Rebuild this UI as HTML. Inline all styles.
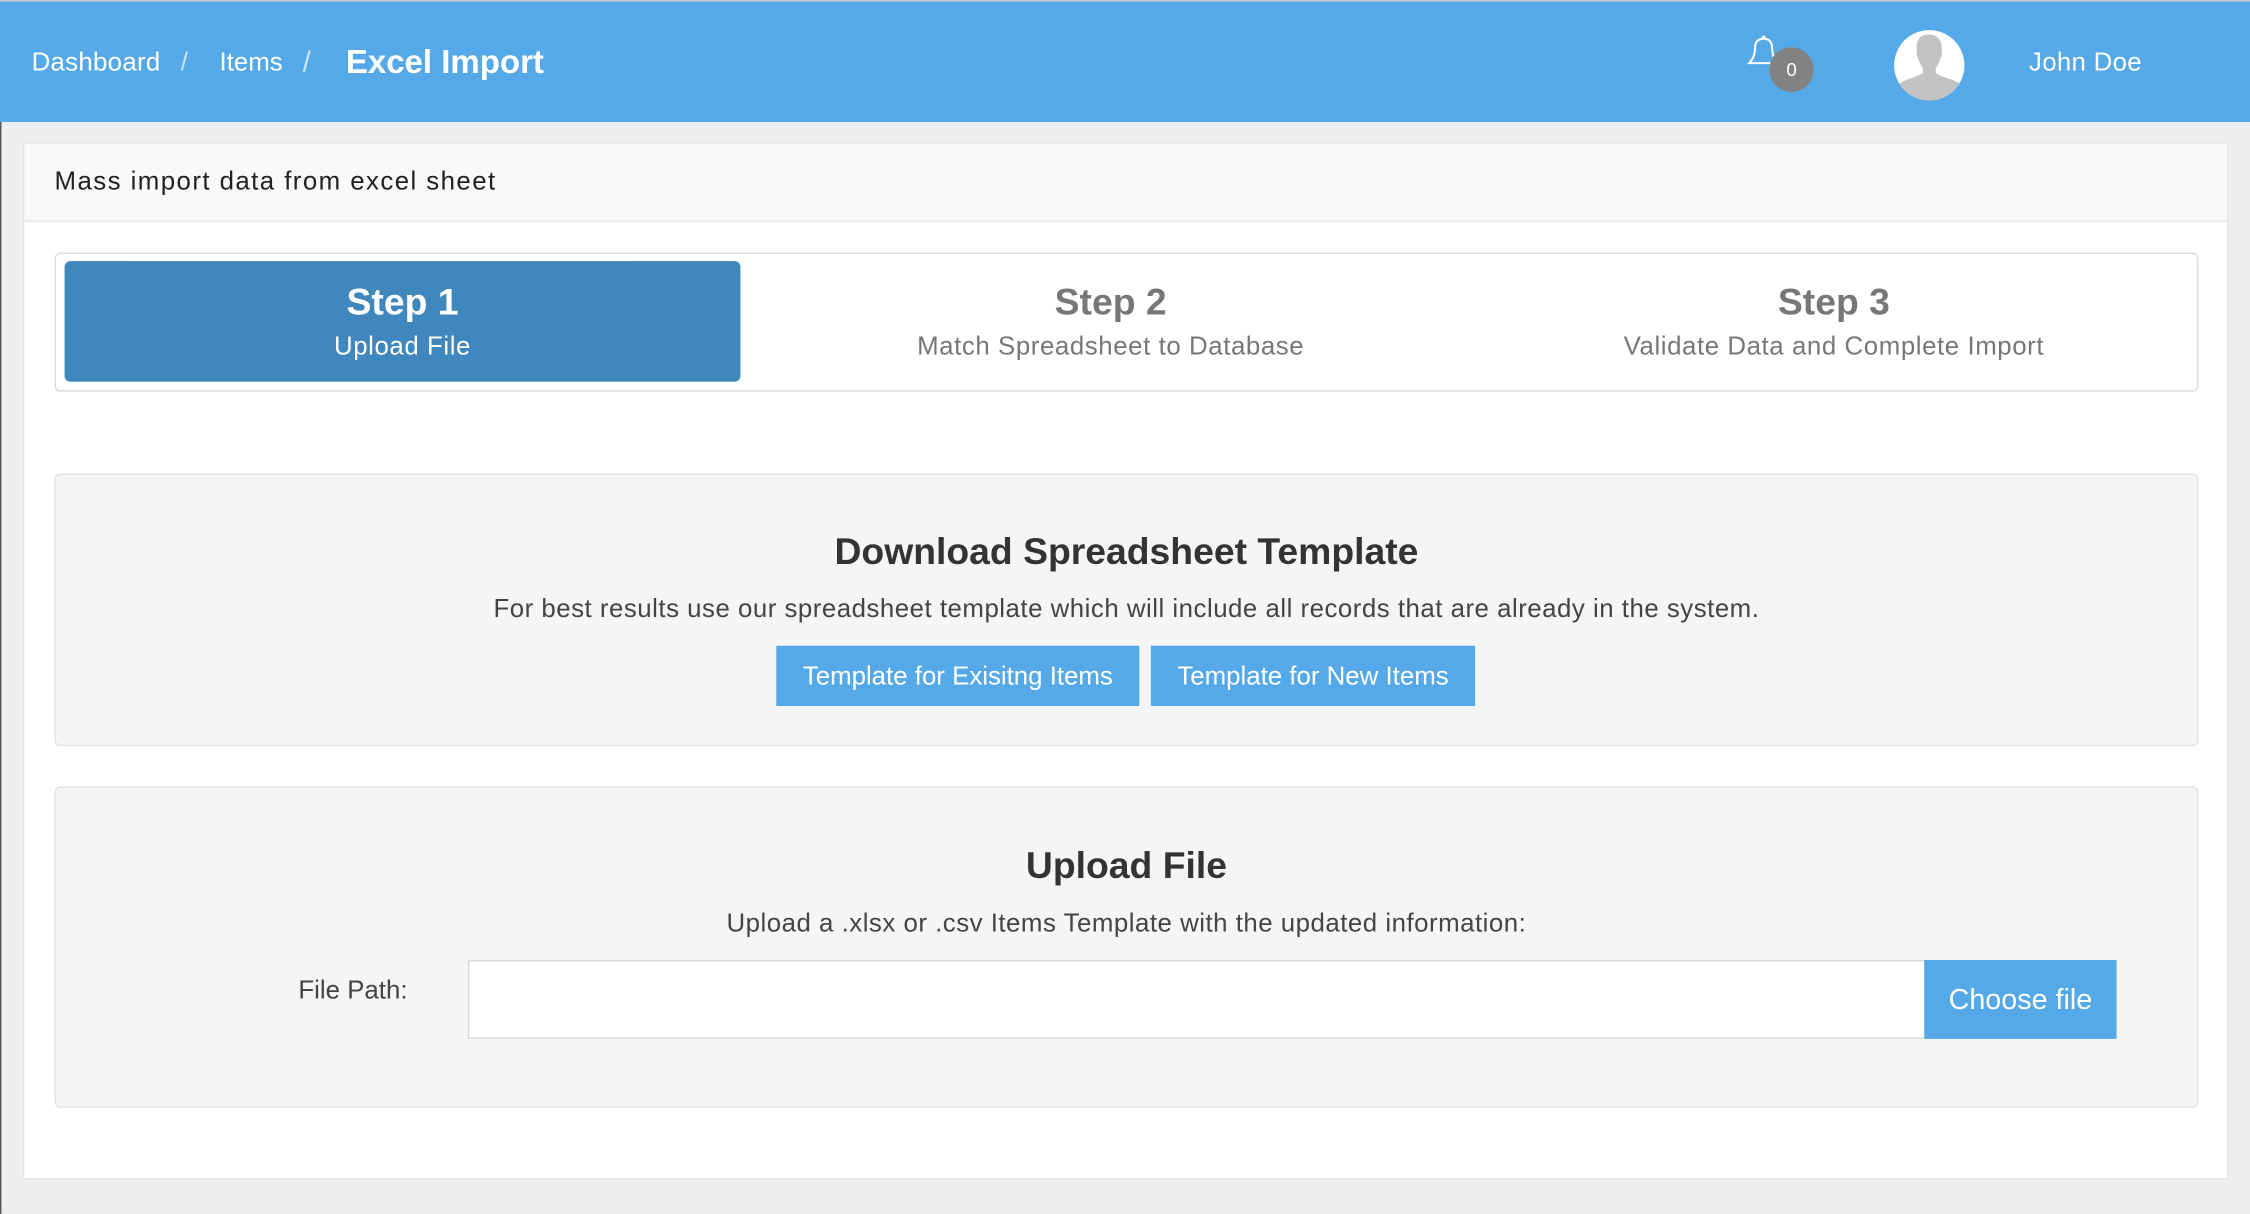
<!DOCTYPE html>
<html><head><meta charset="utf-8"><style>
html,body{margin:0;padding:0;width:2250px;height:1214px;overflow:hidden;background:#eceef0;font-family:"Liberation Sans",Arial,sans-serif;}
#w{position:absolute;left:0;top:0;width:1568px;height:846px;transform:scale(1.43495);transform-origin:0 0;}
.a{position:absolute;}
.t{position:absolute;white-space:nowrap;}
</style></head><body><div id="w">
<div class="a" style="left:0;top:0;width:1568px;height:1px;background:#c8c8c8"></div>
<div class="a" style="left:0;top:1px;width:1568px;height:84px;background:#55a9e8"></div>
<div class="a" style="left:0;top:85px;width:1px;height:761px;background:#555"></div>
<div class="t" style="left:22px;top:33px;font-size:18px;color:#fff;letter-spacing:0.2px">Dashboard</div>
<div class="t" style="left:126px;top:33px;font-size:18px;color:#cfe5f7">/</div>
<div class="t" style="left:153px;top:33px;font-size:18px;color:#fff">Items</div>
<div class="t" style="left:211px;top:33px;font-size:20px;color:#cfe5f7">/</div>
<div class="t" style="left:241px;top:30px;font-size:23px;color:#fff;font-weight:bold">Excel Import</div>
<svg class="a" style="left:1214px;top:22px" width="30" height="32" viewBox="0 0 30 32"><path d="M5 22 Q9 18 9 12 Q9 5 15 5 Q21 5 21 12 Q21 18 25 22 Z" fill="none" stroke="#fff" stroke-width="1.4"/><circle cx="15" cy="4" r="1.3" fill="#fff"/></svg>
<div class="a" style="left:1233px;top:33px;width:31px;height:31px;border-radius:50%;background:#828282;color:#fff;font-size:13px;text-align:center;line-height:31px">0</div>
<div class="a" style="left:1320px;top:21px;width:49px;height:49px;border-radius:50%;background:#fff;overflow:hidden">
<svg width="49" height="49" viewBox="0 0 49 49"><path d="M24 3 C17 3 15 8 16 15 C15 16 16 19 17 20 C18 24 19 25 20 26 L20 30 C17 32 9 34 4 37 L4 49 L46 49 L46 37 C40 34 31 32 29 30 L29 26 C30 25 31 24 32 20 C33 19 34 16 33 15 C34 8 31 3 24 3 Z" fill="#c4c3c4"/></svg></div>
<div class="t" style="left:1414px;top:33px;font-size:18px;color:#fff;letter-spacing:0.2px">John Doe</div>

<div class="a" style="left:16px;top:99px;width:1537px;height:723px;background:#fff;border:1px solid #e3e6e8;box-sizing:border-box"></div>
<div class="a" style="left:17px;top:100px;width:1535px;height:53px;background:#f9f9f9;border-bottom:2px solid #ececec"></div>
<div class="t" style="left:38px;top:116px;font-size:18px;color:#222;letter-spacing:1px">Mass import data from excel sheet</div>

<div class="a" style="left:38px;top:176px;width:1494px;height:97px;border:1px solid #dcdcdc;border-radius:4px;box-sizing:border-box"></div>
<div class="a" style="left:45px;top:182px;width:471px;height:84px;background:#3f87bd;border-radius:4px"></div>
<div class="t" style="left:45px;width:471px;text-align:center;top:195px;font-size:26px;font-weight:bold;color:#fff">Step 1</div>
<div class="t" style="left:45px;width:471px;text-align:center;top:231px;font-size:18px;color:#fff;letter-spacing:0.4px">Upload File</div>
<div class="t" style="left:524px;width:500px;text-align:center;top:195px;font-size:26px;font-weight:bold;color:#777">Step 2</div>
<div class="t" style="left:524px;width:500px;text-align:center;top:231px;font-size:18px;color:#777;letter-spacing:0.4px">Match Spreadsheet to Database</div>
<div class="t" style="left:1028px;width:500px;text-align:center;top:195px;font-size:26px;font-weight:bold;color:#777">Step 3</div>
<div class="t" style="left:1028px;width:500px;text-align:center;top:231px;font-size:18px;color:#777;letter-spacing:0.4px">Validate Data and Complete Import</div>

<div class="a" style="left:38px;top:330px;width:1494px;height:190px;background:#f5f5f5;border:1px solid #e3e3e3;border-radius:4px;box-sizing:border-box"></div>
<div class="t" style="left:38px;width:1494px;text-align:center;top:369px;font-size:26px;font-weight:bold;color:#333">Download Spreadsheet Template</div>
<div class="t" style="left:38px;width:1494px;text-align:center;top:414px;font-size:18px;color:#444;letter-spacing:0.35px">For best results use our spreadsheet template which will include all records that are already in the system.</div>
<div class="a" style="left:541px;top:450px;width:253px;height:42px;background:#55a9e8;color:#fff;font-size:18px;text-align:center;line-height:42px">Template for Exisitng Items</div>
<div class="a" style="left:802px;top:450px;width:226px;height:42px;background:#55a9e8;color:#fff;font-size:18px;text-align:center;line-height:42px">Template for New Items</div>

<div class="a" style="left:38px;top:548px;width:1494px;height:224px;background:#f5f5f5;border:1px solid #e3e3e3;border-radius:4px;box-sizing:border-box"></div>
<div class="t" style="left:38px;width:1494px;text-align:center;top:588px;font-size:26px;font-weight:bold;color:#333">Upload File</div>
<div class="t" style="left:38px;width:1494px;text-align:center;top:633px;font-size:18px;color:#444;letter-spacing:0.35px">Upload a .xlsx or .csv Items Template with the updated information:</div>
<div class="t" style="left:184px;width:100px;text-align:right;top:680px;font-size:18px;color:#444">File Path:</div>
<div class="a" style="left:326px;top:669px;width:1016px;height:55px;background:#fff;border:1px solid #d6d6d6;box-sizing:border-box"></div>
<div class="a" style="left:1341px;top:669px;width:134px;height:55px;background:#55a9e8;color:#fff;font-size:20px;text-align:center;line-height:57px">Choose file</div>
</div></body></html>
